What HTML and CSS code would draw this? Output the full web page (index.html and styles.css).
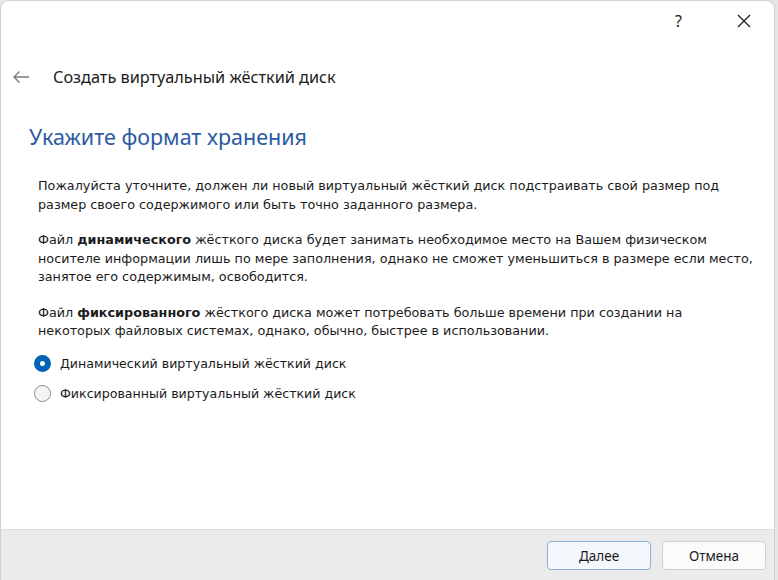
FILE: index.html
```html
<!DOCTYPE html>
<html lang="ru">
<head>
<meta charset="utf-8">
<link rel="stylesheet" href="styles.css">
</head>
<body>
<div class="window">
  <div class="titlebar">
    <span class="tb-help">?</span>
    <span class="tb-close">
      <svg width="14" height="14" viewBox="0 0 14 14"><path d="M1 1 L13 13 M13 1 L1 13" stroke="#1a1a1a" stroke-width="1.2" fill="none"/></svg>
    </span>
  </div>
  <div class="header">
    <svg class="back" width="18" height="14" viewBox="0 0 18 14"><path d="M17 7 H2 M7.5 1.5 L2 7 L7.5 12.5" stroke="#7a7a7a" stroke-width="1.4" fill="none"/></svg>
    <span class="header-title">Создать виртуальный жёсткий диск</span>
  </div>
  <div class="content">
    <h1 class="heading">Укажите формат хранения</h1>
    <p class="para">Пожалуйста уточните, должен ли новый виртуальный жёсткий диск подстраивать свой размер под<br>размер своего содержимого или быть точно заданного размера.</p>
    <p class="para">Файл <b>динамического</b> жёсткого диска будет занимать необходимое место на Вашем физическом<br>носителе информации лишь по мере заполнения, однако не сможет уменьшиться в размере если место,<br>занятое его содержимым, освободится.</p>
    <p class="para">Файл <b>фиксированного</b> жёсткого диска может потребовать больше времени при создании на<br>некоторых файловых системах, однако, обычно, быстрее в использовании.</p>
    <div class="options">
      <label class="option"><span class="radio checked"></span><span>Динамический виртуальный жёсткий диск</span></label>
      <label class="option"><span class="radio"></span><span>Фиксированный виртуальный жёсткий диск</span></label>
    </div>
  </div>
  <div class="footer">
    <button class="btn primary">Далее</button>
    <button class="btn">Отмена</button>
  </div>
</div>
</body>
</html>
```
FILE: styles.css
```css
html, body {
  margin: 0;
  padding: 0;
  background: #e6e6e6;
}
body {
  width: 778px;
  height: 580px;
  overflow: hidden;
}
.window {
  box-sizing: border-box;
  width: 775px;
  height: 580px;
  background: #ffffff;
  border: 1px solid #d2d2d2;
  border-bottom: none;
  border-top-right-radius: 9px;
  border-top-left-radius: 9px;
  display: flex;
  flex-direction: column;
  font-family: "DejaVu Sans", sans-serif;
  color: #1b1b1b;
}
.titlebar {
  height: 40px;
  display: flex;
  justify-content: flex-end;
  align-items: center;
  padding-right: 23px;
  gap: 55px;
  flex: none;
}
.tb-help {
  font-family: "Noto Sans", sans-serif;
  font-size: 16px;
  color: #1a1a1a;
}
.tb-close {
  display: flex;
  width: 14px;
  height: 14px;
}
.header {
  display: flex;
  align-items: center;
  height: 36px;
  margin-top: 18px;
  padding-left: 11px;
  flex: none;
}
.back {
  flex: none;
}
.header-title {
  margin-left: 23px;
  font-family: "Noto Sans", sans-serif;
  font-size: 16.3px;
  color: #1b1b1b;
}
.content {
  flex: 1;
  padding-left: 28px;
}
.heading {
  margin: 27px 0 0 0;
  font-family: "Noto Sans", sans-serif;
  font-weight: normal;
  font-size: 21.5px;
  color: #2b5aa3;
  line-height: 30px;
}
.para {
  margin: 25px 0 0 9px;
  font-size: 12.75px;
  line-height: 18.5px;
  color: #1b1b1b;
  white-space: nowrap;
}
.para + .para {
  margin-top: 17px;
}
.options {
  margin-top: 14px;
  margin-left: 5px;
  display: flex;
  flex-direction: column;
  gap: 12px;
}
.option {
  display: flex;
  align-items: center;
  font-size: 12.6px;
  height: 18px;
  color: #1b1b1b;
}
.radio {
  box-sizing: border-box;
  width: 17px;
  height: 17px;
  border-radius: 50%;
  border: 1px solid #8c8c8c;
  background: #f4f4f4;
  margin-right: 9px;
  flex: none;
}
.radio.checked {
  border: 6px solid #0063b8;
  background: #ffffff;
}
.footer {
  box-sizing: border-box;
  flex: none;
  height: 51px;
  background: #ebebeb;
  border-top: 1px solid #dcdcdc;
  display: flex;
  justify-content: flex-end;
  align-items: flex-start;
  padding-top: 11px;
  padding-right: 8px;
  gap: 11px;
}
.btn {
  width: 104px;
  height: 29px;
  border: 1px solid #d0d0d0;
  border-radius: 4px;
  background: #fbfbfb;
  font-family: "Noto Sans", sans-serif;
  font-size: 13.5px;
  color: #1b1b1b;
  padding: 0;
}
.btn.primary {
  border-color: #88aede;
  background: #f4f7fb;
}
```
